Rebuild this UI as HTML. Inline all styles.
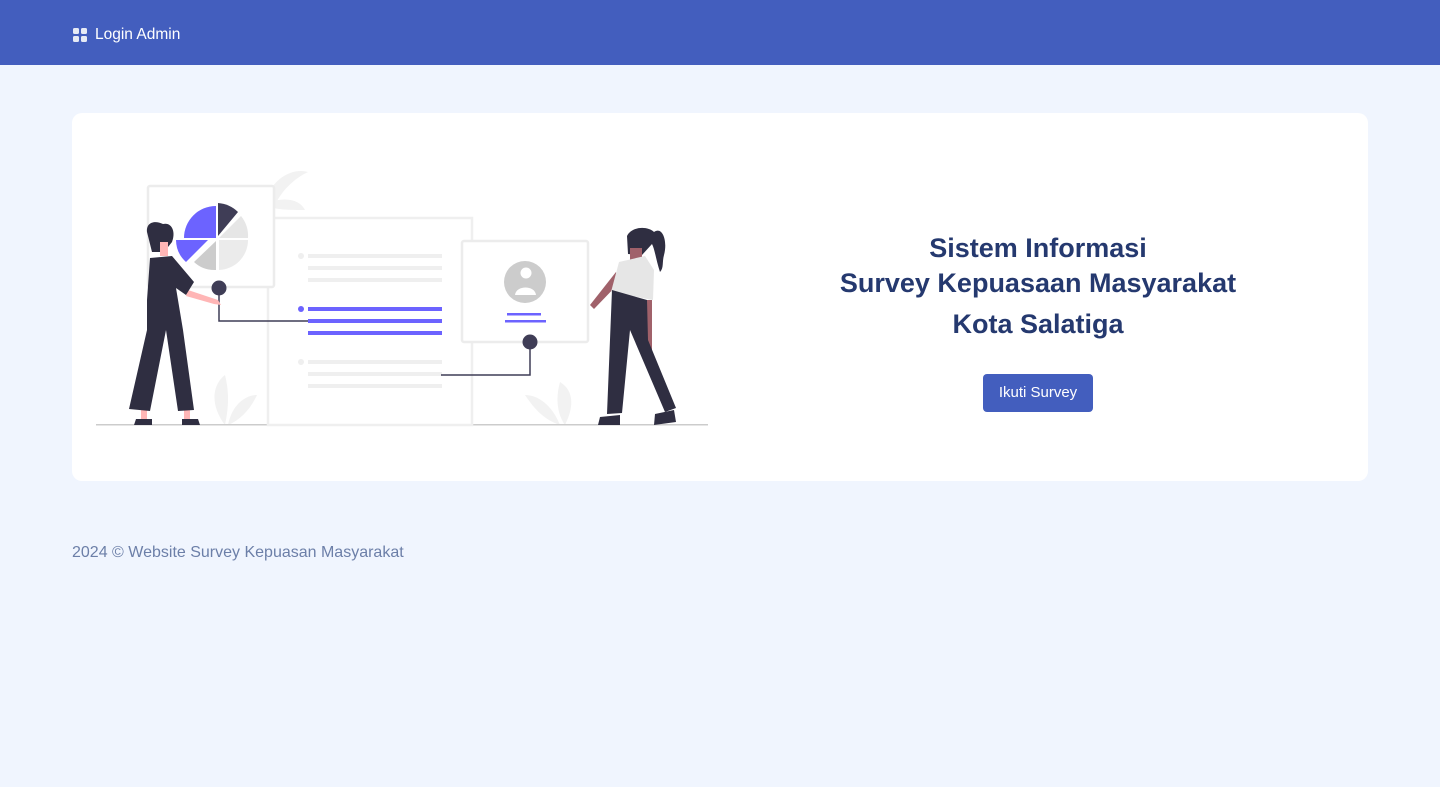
<!DOCTYPE html>
<html><head><meta charset="utf-8"><style>
*{margin:0;padding:0;box-sizing:border-box}
body{width:1440px;height:787px;background:#f0f5fe;font-family:"Liberation Sans",sans-serif;position:relative;overflow:hidden}
.nav{position:absolute;left:0;top:0;width:1440px;height:65px;background:#435ebe}
.nav .brand{position:absolute;left:73px;top:26px;color:#fff;font-size:15.5px;display:flex;align-items:center}
.grid{display:grid;grid-template-columns:6px 6px;gap:2px;margin-right:8px}
.grid i{width:6px;height:6px;background:#e6eaf5;border-radius:1.5px;display:block}
.card{position:absolute;left:72px;top:113px;width:1296px;height:368px;background:#fff;border-radius:10px}
h1{position:absolute;left:760px;width:556px;text-align:center;color:#25396f;font-size:27px;font-weight:bold;line-height:35px}
.btn{position:absolute;left:983px;top:374px;width:110px;height:38px;background:#435ebe;color:#fff;border-radius:4px;font-size:15px;text-align:center;line-height:38px}
.foot{position:absolute;left:72px;top:544px;color:#6c7fa8;font-size:16px}
</style></head><body>
<div class="nav"><div class="brand"><div class="grid"><i></i><i></i><i></i><i></i></div>Login Admin</div></div>
<div class="card"></div>
<svg style="position:absolute;left:0;top:0" width="1440" height="787">
<path d="M265 200 C275 175 295 168 308 172 C295 178 282 190 275 205 Z M262 205 C285 195 300 200 305 210 C290 210 275 210 262 205Z" fill="#f2f2f2"/>
<path d="M225 425 C210 405 212 385 225 375 C230 395 228 410 225 425Z M228 425 C232 405 245 395 257 395 C250 410 240 420 228 425Z" fill="#f2f2f2"/>
<path d="M565 425 C575 405 573 390 560 382 C555 400 558 415 565 425Z M560 425 C552 405 538 395 525 395 C535 410 545 420 560 425Z" fill="#f2f2f2"/>
<rect x="96" y="424" width="612" height="1.5" fill="#ccc"/>
<rect x="268" y="218" width="204" height="207" fill="#fff" stroke="#efefef" stroke-width="2.5"/>
<rect x="148" y="186" width="126" height="101" fill="#fff" stroke="#ececec" stroke-width="2.5" rx="2"/>
<rect x="462" y="241" width="126" height="101" fill="#fff" stroke="#ececec" stroke-width="2.5" rx="2"/>
<g fill="#efefef"><rect x="308" y="254" width="134" height="4"/><rect x="308" y="266" width="134" height="4"/><rect x="308" y="278" width="134" height="4"/>
<rect x="308" y="360" width="134" height="4"/><rect x="308" y="372" width="134" height="4"/><rect x="308" y="384" width="134" height="4"/>
<circle cx="301" cy="256" r="3"/><circle cx="301" cy="362" r="3"/></g>
<g fill="#6c63ff"><rect x="308" y="307" width="134" height="4"/><rect x="308" y="319" width="134" height="4"/><rect x="308" y="331" width="134" height="4"/><circle cx="301" cy="309" r="3"/>
<rect x="507" y="313" width="34" height="2.5"/><rect x="505" y="320" width="41" height="2.5"/></g>
<path d="M216 238 L216 206 A32 32 0 0 0 184 238 Z" fill="#6c63ff"/>
<path d="M218 236 L218 203 A32 32 0 0 1 238 212 Z" fill="#3f3d56"/>
<path d="M219 238 L241 216 A32 32 0 0 1 248 238 Z" fill="#e6e6e6"/>
<path d="M219 240 L248 240 A30 30 0 0 1 219 270 Z" fill="#ebebeb"/>
<path d="M216 241 L216 270 A30 30 0 0 1 194 262 Z" fill="#ccc"/>
<path d="M176 240 L208 240 L186 262 A30 30 0 0 1 176 240Z" fill="#6c63ff"/>
<circle cx="525" cy="282" r="21" fill="#ccc"/>
<circle cx="526" cy="273" r="5.5" fill="#fff"/>
<path d="M515 295 C516 285 535 285 536 295 Z" fill="#fff"/>
<path d="M219 290 V321 H308" stroke="#3f3d56" stroke-width="1.5" fill="none"/>
<path d="M530 344 V375 H441" stroke="#3f3d56" stroke-width="1.5" fill="none"/>
<circle cx="219" cy="288" r="7.5" fill="#3f3d56"/>
<circle cx="530" cy="342" r="7.5" fill="#3f3d56"/>
<path d="M147 232 C146 222 155 220 163 224 C172 222 176 232 172 242 L164 252 L152 252 Z" fill="#2f2e41"/>
<rect x="160" y="242" width="8" height="14" fill="#ffb6b6"/>
<path d="M136 419 L152 419 L152 425 L134 425 Z M182 419 L198 419 L200 425 L182 425 Z" fill="#2f2e41"/>
<rect x="141" y="405" width="6" height="14" fill="#ffb6b6"/><rect x="184" y="405" width="6" height="14" fill="#ffb6b6"/>
<path d="M188 290 L218 300 L221 305 L214 304 L186 296 Z" fill="#ffb6b6"/>
<path d="M150 258 L172 256 L194 282 L186 295 L176 288 L183 330 L194 410 L178 411 L166 330 L150 411 L129 409 L147 330 L147 300 Z" fill="#2f2e41"/>
<path d="M627 236 C632 226 648 226 654 232 C662 226 668 240 664 255 C662 262 664 268 660 272 C656 260 655 250 652 244 L642 255 L628 254 Z" fill="#2f2e41"/>
<rect x="630" y="248" width="12" height="14" fill="#a0616a"/>
<path d="M616 272 L590 305 L594 309 L620 282 Z" fill="#a0616a"/>
<path d="M644 300 L652 300 L652 356 L646 356 Z" fill="#a0616a"/>
<path d="M619 262 L645 256 L654 270 L653 300 L611 292 Z" fill="#e6e6e6"/>
<path d="M612 290 L647 300 L648 340 L676 408 L665 412 L630 330 L622 413 L607 414 Z" fill="#2f2e41"/>
<path d="M600 417 L620 415 L620 425 L598 425 Z M655 414 L674 410 L676 422 L654 425 Z" fill="#2f2e41"/>
</svg>
<h1 style="top:231px">Sistem Informasi<br>Survey Kepuasaan Masyarakat</h1>
<h1 style="top:307px">Kota Salatiga</h1>
<div class="btn">Ikuti Survey</div>
<div class="foot">2024 © Website Survey Kepuasan Masyarakat</div>
</body></html>
